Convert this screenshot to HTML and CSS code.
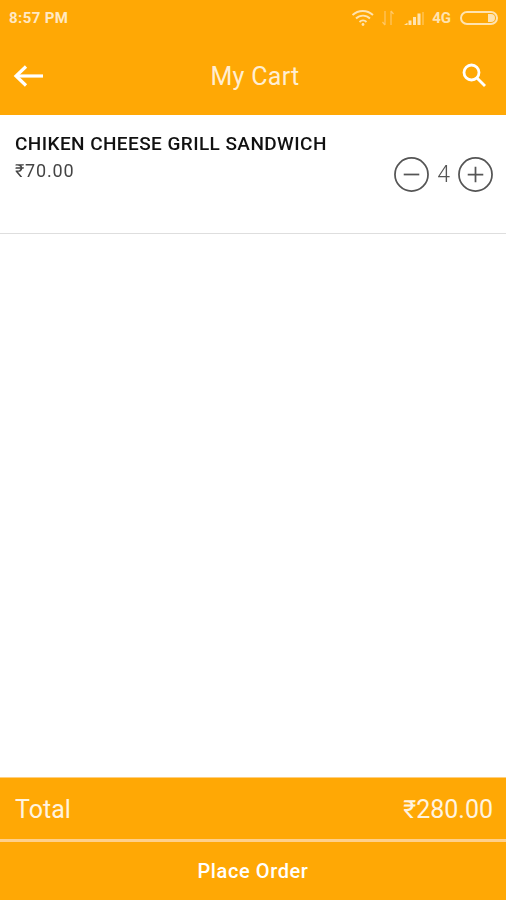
FILE: index.html
```html
<!DOCTYPE html>
<html lang="en">

<head>
    <meta charset="UTF-8">
    <meta name="viewport" content="width=device-width, initial-scale=1.0">
    <title>My Cart</title>
    <link rel="stylesheet" href="styles.css">
</head>

<body>
    <div class="page">
        <div class="header">
            <div class="statusbar">
                <span class="time">8:57 PM</span>
                <div class="status-icons">
                    <svg class="wifi" width="24" height="18" viewBox="0 0 24 18" fill="none" stroke="#ffe3b0" stroke-width="1.9">
                        <path d="M1.5 6 A15 15 0 0 1 22 6" />
                        <path d="M5 9.5 A10 10 0 0 1 19 9.5" />
                        <path d="M8.5 13 A5 5 0 0 1 15.5 13" />
                        <circle cx="12" cy="15.5" r="1.4" fill="#ffe3b0" stroke="none" />
                    </svg>
                    <svg class="data" width="14" height="16" viewBox="0 0 14 16" fill="none" stroke="#ffc766" stroke-width="1.2">
                        <path d="M4 1 V15 M4 15 L1.5 12" />
                        <path d="M10 15 V1 M10 1 L12.5 4" />
                    </svg>
                    <svg class="signal" width="21" height="14" viewBox="0 0 21 14" fill="#ffe3b0">
                        <path d="M0 14 L3 12 H3.5 V14 Z" />
                        <rect x="4.5" y="9.5" width="3" height="4.5" />
                        <rect x="9" y="6" width="3" height="8" />
                        <rect x="13.5" y="2.5" width="3" height="11.5" />
                        <rect x="18" y="1" width="2" height="13" opacity="0.35" />
                    </svg>
                    <span class="net">4G</span>
                    <div class="battery">
                        <div class="battery-fill"></div>
                    </div>
                </div>
            </div>
            <div class="toolbar">
                <svg width="32" height="24" viewBox="0 0 32 24" fill="none" stroke="#fff" stroke-width="3.2">
                    <path d="M30 12 H3" />
                    <path d="M13 2.5 L3 12 L13 21.5" />
                </svg>
                <span class="title">My Cart</span>
                <svg class="search" width="26" height="26" viewBox="0 0 26 26" fill="none" stroke="#fff" stroke-width="2.8">
                    <circle cx="10.5" cy="10.5" r="7.5" />
                    <path d="M16 16 L24 24" />
                </svg>
            </div>
        </div>

        <div class="cart-list">
            <div class="cart-item">
                <div class="item-info">
                    <div class="item-name">CHIKEN CHEESE GRILL SANDWICH</div>
                    <div class="item-price">₹70.00</div>
                </div>
                <div class="qty">
                    <svg width="35" height="35" viewBox="0 0 36 36" fill="none" stroke="#555" stroke-width="1.8">
                        <circle cx="18" cy="18" r="17" />
                        <path d="M10 18 H26" />
                    </svg>
                    <span class="qty-num">4</span>
                    <svg width="35" height="35" viewBox="0 0 36 36" fill="none" stroke="#555" stroke-width="1.8">
                        <circle cx="18" cy="18" r="17" />
                        <path d="M10 18 H26 M18 10 V26" />
                    </svg>
                </div>
            </div>
        </div>

        <div class="footer">
            <div class="total-row">
                <span>Total</span>
                <span>₹280.00</span>
            </div>
            <div class="place-order">Place Order</div>
        </div>
    </div>
</body>

</html>
```

FILE: styles.css
```css
* {
    box-sizing: border-box;
}

body {
    margin: 0;
    font-family: Roboto, "Noto Sans", sans-serif;
    background-color: #fff;
}

/* the reference is an upscaled capture, so everything is slightly soft */
.page {
    display: flex;
    flex-direction: column;
    height: 900px;
    overflow: hidden;
    filter: blur(0.4px);
}

.header {
    height: 115px;
    background-color: #ffa805;
    color: #fff;
}

.statusbar {
    display: flex;
    align-items: center;
    justify-content: space-between;
    height: 36px;
    padding: 0 8px 0 9px;
}

.time {
    font-size: 15px;
    font-weight: 700;
    letter-spacing: 0.4px;
    color: #ffe9c4;
}

.status-icons {
    display: flex;
    align-items: center;
}

.wifi {
    margin-right: 1px;
}

.data {
    margin-left: 5px;
}

.signal {
    margin-left: 9px;
}

.net {
    margin-left: 7px;
    font-size: 15px;
    font-weight: 700;
    color: #ffe3b0;
}

.battery {
    display: flex;
    justify-content: flex-end;
    width: 38px;
    height: 14px;
    margin-left: 9px;
    padding: 1px;
    border: 2px solid #ffe3b0;
    border-radius: 7px;
}

.battery-fill {
    width: 7px;
    background-color: #ffe3b0;
    border-radius: 0 5px 5px 0;
}

.toolbar {
    display: flex;
    align-items: center;
    justify-content: space-between;
    height: 79px;
    padding: 0 19px 0 13px;
}

.title {
    margin: 2px 0 0 4px;
    font-size: 25px;
    letter-spacing: 0.3px;
    color: #ffeed2;
}

.search {
    margin: 0 0 2px 0;
}

.cart-list {
    flex: 1;
}

.cart-item {
    display: flex;
    justify-content: space-between;
    height: 119px;
    padding: 18px 13px 0 15px;
    border-bottom: 1px solid #dedede;
}

.item-name {
    font-size: 19px;
    font-weight: 500;
    line-height: 22px;
    letter-spacing: 0.42px;
    color: #111;
}

.item-price {
    margin-top: 5px;
    font-size: 18px;
    line-height: 22px;
    letter-spacing: 0.8px;
    color: #444;
}

.qty {
    display: flex;
    align-items: center;
    gap: 8px;
    height: 36px;
    margin-top: 23px;
}

.qty-num {
    font-size: 23px;
    font-weight: 300;
    color: #555;
}

.footer {
    color: #fff;
    background-color: #ffa805;
}

.total-row {
    display: flex;
    align-items: center;
    justify-content: space-between;
    height: 65px;
    padding: 2px 13px 0 15px;
    font-size: 25px;
    color: #fff4e0;
    border-top: 1px solid #ffcf80;
    border-bottom: 3px solid #ffd08a;
}

.place-order {
    display: flex;
    align-items: center;
    justify-content: center;
    height: 58px;
    font-size: 20px;
    font-weight: 500;
    letter-spacing: 0.6px;
}
```
